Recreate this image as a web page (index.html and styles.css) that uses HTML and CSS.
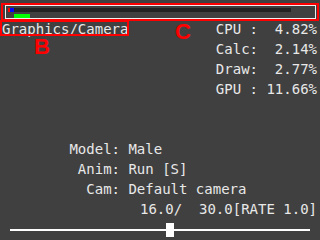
FILE: index.html
```html
<!DOCTYPE html>
<html lang="en">
	<head>
		<meta charset="utf-8">
		<title>Graphics/Camera</title>
		<link rel="stylesheet" href="styles.css">
	</head>
	<body>
		<div class="screen">
			<div class="meter">
				<div class="track"><span class="mark red"></span><span class="mark blue"></span></div>
				<div class="load"></div>
			</div>
			<div class="top">
				<div class="line">Graphics/Camera</div>
				<div class="stats">
					<div class="line">CPU :  4.82%</div>
					<div class="line">Calc:  2.14%</div>
					<div class="line">Draw:  2.77%</div>
					<div class="line">GPU : 11.66%</div>
				</div>
			</div>
			<div class="info">
				<div class="line">        Model: Male</div>
				<div class="line">         Anim: Run [S]</div>
				<div class="line">          Cam: Default camera</div>
				<div class="line rate">16.0/  30.0[RATE 1.0]</div>
			</div>
			<div class="slider">
				<div class="rail"></div>
				<div class="knob" style="left: 53.33%"></div>
			</div>
			<!-- annotation overlays -->
			<div class="note box-c"></div>
			<div class="note box-b"></div>
			<div class="note letter letter-b">B</div>
			<div class="note letter letter-c">C</div>
		</div>
	</body>
</html>
```

FILE: styles.css
```css
body {
	margin: 0;
	background-color: #404040;
	color: #e8e8e8;
	font-family: "DejaVu Sans Mono", monospace;
	font-size: 14px;
	line-height: 20px;
}
.screen {
	position: relative;
	width: 320px;
	height: 240px;
	overflow: hidden;
}
.meter {
	box-sizing: border-box;
	margin: 5px 4px 0 5px;
	height: 14px;
	padding: 2px 0 0 2px;
	border: 1px solid #f0f0f0;
}
.track {
	display: flex;
	width: 283px;
	height: 4px;
	background-color: #222;
}
.mark {
	height: 4px;
}
.mark.red {
	width: 2px;
	background-color: #ff0000;
}
.mark.blue {
	width: 4px;
	background-color: #0000ff;
}
.load {
	margin: 2px 0 0 6px;
	width: 16px;
	height: 4px;
	background-color: #00ff00;
}
.line {
	white-space: pre;
}
.top {
	display: flex;
	justify-content: space-between;
	padding: 0 3px 0 2px;
}
.stats {
	text-align: right;
}
.info {
	margin-top: 40px;
	padding: 0 3px 0 2px;
}
.rate {
	text-align: right;
}
.slider {
	position: relative;
	display: flex;
	align-items: center;
	margin: 4px 10px 0 10px;
	height: 14px;
}
.rail {
	width: 100%;
	height: 2px;
	background-color: #fff;
}
.knob {
	position: absolute;
	top: 0;
	width: 8px;
	height: 14px;
	background-color: #fff;
	transform: translateX(-50%);
}
.note {
	position: absolute;
	box-sizing: border-box;
}
.box-c {
	left: 1px;
	top: 3px;
	width: 318px;
	height: 18px;
	border: 2px solid #ff0000;
}
.box-b {
	left: 0;
	top: 20px;
	width: 129px;
	height: 16px;
	border: 2px solid #ff0000;
}
.letter {
	color: #ff0000;
	font-family: "Liberation Sans", Arial, sans-serif;
	font-weight: bold;
	font-size: 22px;
	line-height: 1;
}
.letter-b {
	left: 34px;
	top: 36px;
}
.letter-c {
	left: 175px;
	top: 21px;
}
```
